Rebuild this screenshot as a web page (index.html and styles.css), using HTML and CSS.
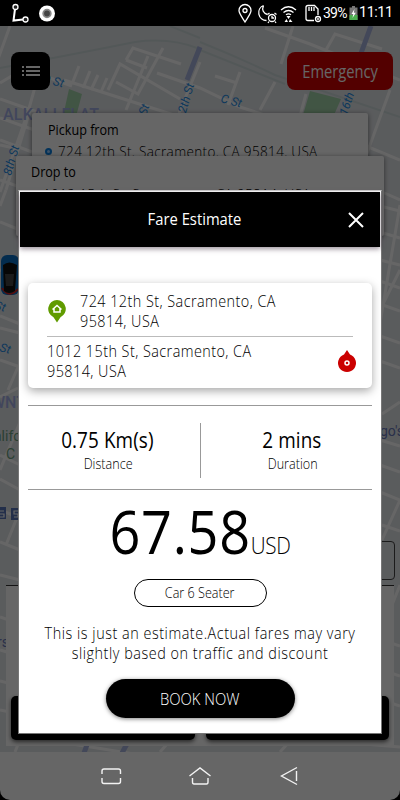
FILE: index.html
```html
<!DOCTYPE html>
<html lang="en">
<head>
  <meta charset="UTF-8">
  <meta name="viewport" content="width=device-width, initial-scale=1.0">
  <title>Fare Estimate</title>
  <link rel="stylesheet" href="styles.css">
</head>
<body>
  <div class="phone">

    <header class="status-bar">
      <svg class="status-left" width="60" height="26" viewBox="0 0 60 26" fill="none" stroke="#fff">
        <path d="M15 9L13.500 20.500L23 19.500" stroke-width="2"/>
        <circle cx="15.500" cy="7" r="2.500" fill="#222" stroke-width="1.300"/>
        <circle cx="25.500" cy="19.500" r="2.500" fill="#222" stroke-width="1.300"/>
        <circle cx="47" cy="13.500" r="8" fill="#fff" stroke="none"/>
        <circle cx="47" cy="13.500" r="3.800" fill="#444" stroke="#888" stroke-width="1.800"/>
      </svg>
      <div class="status-right">
        <svg width="87" height="26" viewBox="0 0 87 26" fill="none" stroke="#fff" stroke-width="1.300">
          <path d="M9 22C6 17 3 13.500 3 10.500A6 6 0 0 1 15 10.500C15 13.500 12 17 9 22Z"/>
          <circle cx="9" cy="10.500" r="2"/>
          <path d="M27.500 5.500A7.800 7.800 0 0 0 30.500 20.500M27.500 5.500C25.500 10 27.500 13.500 31.500 14.500"/>
          <circle cx="36" cy="18" r="3.500"/>
          <path d="M36 16V18H38M31.500 14.500L33.500 13M38.500 13L40.500 14.500M33 21.500L32 23M39 21.500L40 23"/>
          <path d="M45 10Q52.500 3.500 60 10M47.500 12.500Q52.500 8.500 57.500 12.500M50 14.800Q52.500 13 55 14.800"/>
          <path d="M50.500 16H54.500L52.500 19ZM48.500 22L50.500 19L52 22ZM54 19L56.500 22H52.800Z" fill="#fff" stroke="none"/>
          <path d="M78 20.500H72Q70 20.500 70 18.500V7.500Q70 5.500 72 5.500H78.500L82 9V15"/>
          <path d="M73 7V11M75.500 7V11M78 7V11"/>
          <circle cx="82" cy="19" r="2.500"/>
          <path d="M81 18L83 20M83 18L81 20" stroke-width=".7"/>
        </svg>
        <span class="battery-level">39%</span>
        <svg width="9" height="16" viewBox="0 0 9 16">
          <path d="M3 1H6V2.500H8.500V15H.5V2.500H3Z" fill="#777"/>
          <path d="M.5 10H8.500V15H.5Z" fill="#4caf50"/>
          <path d="M5.500 4L2.500 9H4.300L3.500 13L6.800 7.800H4.800Z" fill="#fff"/>
        </svg>
        <span class="clock">11:11</span>
      </div>
    </header>

    <main class="booking">
      <svg class="map" width="400" height="726" viewBox="0 26 400 726">
        <rect y="26" width="400" height="726" fill="#e2e5e9"/>
        <g fill="none" stroke="#cfdcdd" stroke-width="2">
          <path d="M0 68Q70 55 135 42Q170 37 200 49"/>
          <path d="M200 42Q240 58 275 75L400 117M200 50L285 84"/>
          <path d="M170 26L200 38"/>
        </g>
        <g fill="#a4d4ab">
          <path d="M69 89L82 94L74 124L62 121Z"/>
          <path d="M310 91L341 99L334 115H303Z"/>
        </g>
        <g fill="none" stroke="#fff" stroke-width="3">
          <path d="M10 26L-3 62M0 83L15 74M37 80L28 112L0 192M50 78L72 86M64 80L240 136"/>
          <path d="M72 84L79 66M83 88L90 71M91 90L98 75M101 92L107 78M108 90L120 64L180 99M116 82L138 94L163 48"/>
          <path d="M126 60L133 48L181 64M126 60L147 68M157 73L200 88L240 107L280 120M148 56L126 110"/>
          <path d="M293 26L281 64M265 28L310 44L400 80M326 50L335 34L382 49M215 76L237 83M240 72L228 105"/>
          <path d="M275 82L260 110M306 94L300 116M200 62L168 140M390 90L350 200"/>
          <path d="M0 99L60 120M0 118L40 132M0 140L32 152M30 110L6 190M14 148L0 145M0 180L28 190"/>
          <path d="M0 222L20 230M0 270L20 278M0 316L20 324M0 328L20 333M0 360L20 367M0 397L18 388M6 190L0 206M18 367L8 390"/>
          <path d="M0 455L20 465M0 479L20 490M18 515L6 545M0 575L20 580M20 422L0 470M0 542L20 550M0 510L20 518"/>
          <path d="M366 146L400 160M380 191L400 200M380 206L400 211M380 232L400 238M380 260L400 265M380 281L400 288M380 304L400 311M380 336L400 343M380 361L400 368"/>
          <path d="M400 205L378 335M400 270L380 310M382 414L400 402M400 446L380 440M380 465L400 472M380 492L400 500M400 500L382 540M382 525L400 531"/>
          <path d="M0 617L20 624M0 650L20 656M0 681L20 686M0 710L30 716L400 747M15 752L30 714M60 742L140 755M280 752L300 730M390 610L400 585M382 640L400 646M382 670L400 676M382 700L400 706M160 752L175 735"/>
        </g>
        <g stroke="#a9b3de" stroke-width="5">
          <path d="M200 47L187 80M371 26L360 56M88 742L84 753M128 742L122 753"/>
        </g>
        <g class="map-label" fill="#258de6">
          <text x="42" y="82" transform="rotate(15 42 82)">D St</text>
          <text x="220" y="102" transform="rotate(15 220 102)">C St</text>
          <text x="184" y="120" transform="rotate(-74 184 120)">12th St</text>
          <text x="146" y="116" transform="rotate(-70 146 116)">St</text>
          <text x="347" y="116" transform="rotate(-72 347 116)">16th St</text>
          <text x="11" y="176" transform="rotate(-74 11 176)">8th St</text>
          <text x="-6" y="309" transform="rotate(15 -6 309)">St</text>
          <text x="-1" y="351" transform="rotate(15 -1 351)">St</text>
        </g>
        <g class="map-area" fill="#a4afe6">
          <text x="3" y="120" textLength="96">ALKALI FLAT</text>
          <text x="-9" y="408">WNT</text>
        </g>
        <g class="map-place">
          <text x="-6" y="441" fill="#6ba180">alifo</text>
          <text x="6" y="459" fill="#6ba180">C</text>
          <text x="380" y="436" fill="#6878b8">go's</text>
          <text x="-3" y="647" fill="#6878b8">rs</text>
        </g>
        <path d="M0 507H6V519H0ZM11 508H20V520H11Z" fill="#5776b8"/>
        <path d="M0 511H4M0 514H4V517H0M18 511H14V514H18V517H14" fill="none" stroke="#fff" stroke-width="1.200"/>
        <g>
          <rect x="1" y="255" width="18" height="40" rx="6" fill="#086fc3"/>
          <path d="M2 288Q9 299 18 289" fill="none" stroke="#c22" stroke-width="2"/>
          <path d="M3 265Q9 260 17 265L15 291Q9 295 4 291Z" fill="#111"/>
          <path d="M5 274H14L13 286H6Z" fill="#444"/>
        </g>
      </svg>

      <div class="toolbar">
        <button class="menu-button" aria-label="Menu">
          <svg width="20" height="14" viewBox="0 0 20 14" stroke="#fff" stroke-width="2">
            <path d="M1 3H3M5 3H19M1 7H3M5 7H19M1 11H3M5 11H19"/>
          </svg>
        </button>
        <button class="emergency"><span>Emergency</span></button>
      </div>

      <section class="place-card pickup">
        <h2>Pickup from</h2>
        <p><i class="dot"></i><span>724 12th St, Sacramento, CA 95814, USA</span></p>
      </section>
      <section class="place-card drop">
        <h2>Drop to</h2>
        <p><span>1012 15th St, Sacramento, CA 95814, USA</span></p>
      </section>

      <div class="options">
        <div class="option-box"></div>
        <div class="option-panel">
          <div class="option-buttons"><i></i><i></i></div>
        </div>
      </div>
    </main>

    <nav class="nav-bar">
      <svg width="400" height="48" viewBox="0 0 400 48" fill="none" stroke="#f2f2f2" stroke-width="1.400">
        <path d="M102 22V19Q102 17 104 17H118.500Q120.500 17 120.500 19V22M102 26V29.500Q102 31.500 104 31.500H118.500Q120.500 31.500 120.500 29.500V26"/>
        <path d="M189.500 24L200 16L210.500 24M192.500 26V30Q192.500 32 194 32H206.500Q208 32 208 30V26"/>
        <path d="M297 15.500L281.500 24L297 32.500M296.500 19V29"/>
      </svg>
    </nav>

    <div class="overlay">
      <div class="dialog">
        <div class="dialog-header">
          <h1>Fare Estimate</h1>
          <svg class="close" width="18" height="18" viewBox="0 0 18 18" stroke="#fff" stroke-width="2">
            <path d="M2 2L16 16M16 2L2 16"/>
          </svg>
        </div>

        <div class="trip">
          <div class="trip-row from">
            <svg width="20" height="24" viewBox="0 0 20 24">
              <path d="M10 1A9 9 0 0 1 13.500 18.200L10 23.500L6.500 18.200A9 9 0 0 1 10 1Z" fill="#609b00"/>
              <path d="M5.500 10.500L10 6.500L14.500 10.500M7 9.500V13H13V9.500" fill="none" stroke="#fff" stroke-width="1.500"/>
            </svg>
            <p>724 12th St, Sacramento, CA<br>95814, USA</p>
          </div>
          <div class="trip-row to">
            <p>1012 15th St, Sacramento, CA<br>95814, USA</p>
            <svg width="20" height="24" viewBox="0 0 20 24">
              <path d="M10 1L13 5.600A9 9 0 1 1 7 5.600Z" fill="#cb0000"/>
              <circle cx="10" cy="14" r="2" fill="none" stroke="#fff" stroke-width="1.500"/>
            </svg>
          </div>
        </div>

        <div class="stats">
          <div class="stat">
            <strong>0.75 Km(s)</strong>
            <span>Distance</span>
          </div>
          <div class="stat">
            <strong>2 mins</strong>
            <span>Duration</span>
          </div>
        </div>

        <div class="fare"><span class="amount">67.58</span><span class="currency">USD</span></div>
        <div class="car-type"><span>Car 6 Seater</span></div>
        <p class="note">This is just an estimate.Actual fares may vary<br>slightly based on traffic and discount</p>
        <button class="book"><span>BOOK NOW</span></button>
      </div>
    </div>

  </div>
</body>
</html>
```
FILE: styles.css
```css
* {
  margin: 0;
  padding: 0;
  box-sizing: border-box;
}

body {
  background: #000;
  font-family: "Open Sans", "Noto Sans", sans-serif;
  font-weight: 300;
  color: #000;
}

button {
  border: 0;
  font: inherit;
}

h1, h2 {
  font-weight: 400;
}

svg {
  display: block;
  flex: none;
}

/* narrow lettering */
.emergency span,
.place-card h2,
.place-card span,
.dialog-header h1,
.trip p,
.stat strong,
.stat span,
.fare,
.car-type span,
.note,
.book span {
  display: inline-block;
  transform: scaleX(0.9);
}

.phone {
  position: relative;
  width: 400px;
  height: 800px;
  overflow: hidden;
  background: #000;
}

/* status bar */
.status-bar {
  display: flex;
  justify-content: space-between;
  height: 26px;
}

.status-right {
  display: flex;
  align-items: center;
  width: 164px;
  color: #fff;
  font: 400 14px/28px Roboto, sans-serif;
}

.battery-level {
  width: 26px;
  letter-spacing: -0.8px;
}

.clock {
  margin-left: 1px;
  font-size: 14.5px;
  letter-spacing: -0.5px;
}

/* screen behind the dialog */
.booking {
  position: relative;
  height: 726px;
  overflow: hidden;
}

.map {
  position: absolute;
  left: 0;
  top: 0;
}

.map-label {
  font: italic 400 12px Roboto, sans-serif;
}

.map-area {
  font: 500 16px Roboto, sans-serif;
}

.map-place {
  font: 400 14px Roboto, sans-serif;
}

.toolbar {
  position: relative;
  display: flex;
  justify-content: space-between;
  padding: 26px 7px 0 11px;
}

.menu-button,
.emergency {
  display: flex;
  align-items: center;
  justify-content: center;
  height: 38px;
  border-radius: 8px;
}

.menu-button {
  width: 39px;
  background: #000;
}

.emergency {
  width: 106px;
  background: #d00000;
  color: #fff;
  font-size: 17.5px;
  font-weight: 400;
}

.emergency span {
  transform: scaleX(0.84);
}

.place-card {
  position: relative;
  background: #fff;
  border-radius: 2px;
  box-shadow: 0 1px 5px rgba(0, 0, 0, 0.5);
}

.place-card h2,
.place-card span {
  transform-origin: left;
}

.place-card h2 {
  display: block;
  font-size: 14px;
  line-height: 21px;
}

.place-card p {
  display: flex;
  align-items: center;
  font-size: 15px;
  line-height: 22px;
  letter-spacing: 0.4px;
  white-space: nowrap;
}

.pickup {
  height: 60px;
  margin: 23px 32px 0;
  padding: 6px 16px;
}

.pickup .dot {
  flex: none;
  width: 7px;
  height: 7px;
  margin: 0 6px 0 -3px;
  border: 2px solid #0a7fe0;
  border-radius: 50%;
  background: #9cf;
}

.drop {
  height: 80px;
  margin: -17px 16px 0;
  padding: 5px 15px;
}

.drop p {
  padding: 1px 0 0 12px;
}

.options {
  position: relative;
  margin-top: 305px;
}

.option-box {
  height: 39px;
  margin: 0 5px 0 19px;
  border: 1px solid #444;
  border-radius: 4px;
}

.option-panel {
  display: flex;
  align-items: flex-end;
  height: 161px;
  margin: 5px 6px 0;
  padding: 0 5px 6px;
  border-top: 1px solid #333;
  background: #fff;
}

.option-buttons {
  display: flex;
  gap: 11px;
  width: 100%;
}

.option-buttons i {
  flex: 1;
  height: 44px;
  border-radius: 5px;
  background: #000;
  box-shadow: 0 2px 4px rgba(0, 0, 0, 0.6);
}

/* dialog */
.overlay {
  position: absolute;
  top: 26px;
  left: 0;
  width: 400px;
  height: 726px;
  padding: 164px 18px 0;
  background: rgba(0, 0, 0, 0.6);
}

.dialog {
  height: 544px;
  padding: 2px;
  border: 1px solid #777;
  border-top-color: #ccc;
  background: #fff;
}

.dialog-header {
  display: flex;
  align-items: center;
  height: 55px;
  margin: -1px -1px 0;
  padding: 0 15px 0 22px;
  background: #000;
  box-shadow: 0 2px 5px rgba(60, 40, 60, 0.5);
  color: #fff;
}

.dialog-header h1 {
  flex: 1;
  padding-bottom: 2px;
  font-size: 17px;
  text-align: center;
  transform: scaleX(0.87);
}

.trip {
  height: 105px;
  margin: 36px 7px 0;
  padding: 8px 19px 0;
  border-radius: 5px;
  box-shadow: 0 3px 10px rgba(0, 0, 0, 0.35);
  font-size: 16px;
  line-height: 20px;
  letter-spacing: 0.5px;
}

.trip p {
  transform-origin: left;
}

.trip-row {
  display: flex;
  white-space: nowrap;
}

.from {
  gap: 13px;
  height: 46px;
  border-bottom: 1px solid #bbb;
}

.from svg {
  margin-top: 8px;
}

.to {
  justify-content: space-between;
  padding-top: 4px;
}

.to svg {
  margin: 8px -4px 0 0;
}

.stats {
  display: flex;
  height: 85px;
  margin: 17px 7px 0;
  padding: 17px 0 11px;
  border: solid #999;
  border-width: 1px 0;
}

.stat {
  flex: 1;
  display: flex;
  flex-direction: column;
  align-items: center;
}

.stat + .stat {
  border-left: 1px solid #999;
  padding-left: 12px;
}

.stat:first-child {
  padding-right: 12px;
}

.stat strong {
  margin-top: 3px;
  font-size: 21px;
  font-weight: 400;
  line-height: 28px;
  letter-spacing: 0.1px;
}

.stat span {
  font-size: 14px;
  line-height: 19px;
}

.fare {
  display: flex;
  justify-content: center;
  align-items: baseline;
  height: 89px;
  line-height: 82px;
}

.amount {
  font-size: 60px;
  font-weight: 400;
  letter-spacing: 0.8px;
}

.currency {
  font-size: 23px;
  letter-spacing: -0.4px;
}

.car-type {
  width: 133px;
  height: 28px;
  margin: 0 auto;
  border: 1px solid #000;
  border-radius: 14px;
  font-size: 14px;
  line-height: 26px;
  text-align: center;
}

.note {
  display: block;
  margin-top: 16px;
  font-size: 16px;
  line-height: 20px;
  letter-spacing: 0.6px;
  text-align: center;
  white-space: nowrap;
}

.book {
  display: block;
  width: 189px;
  height: 39px;
  margin: 16px auto 0;
  border-radius: 20px;
  background: #000;
  box-shadow: 0 1px 4px rgba(0, 0, 0, 0.5);
  color: #fff;
  font-size: 17px;
}

.book span {
  transform: scaleX(0.87);
}

/* system navigation */
.nav-bar {
  height: 48px;
  border-radius: 0 0 10px 10px;
  background: #666;
}
```
